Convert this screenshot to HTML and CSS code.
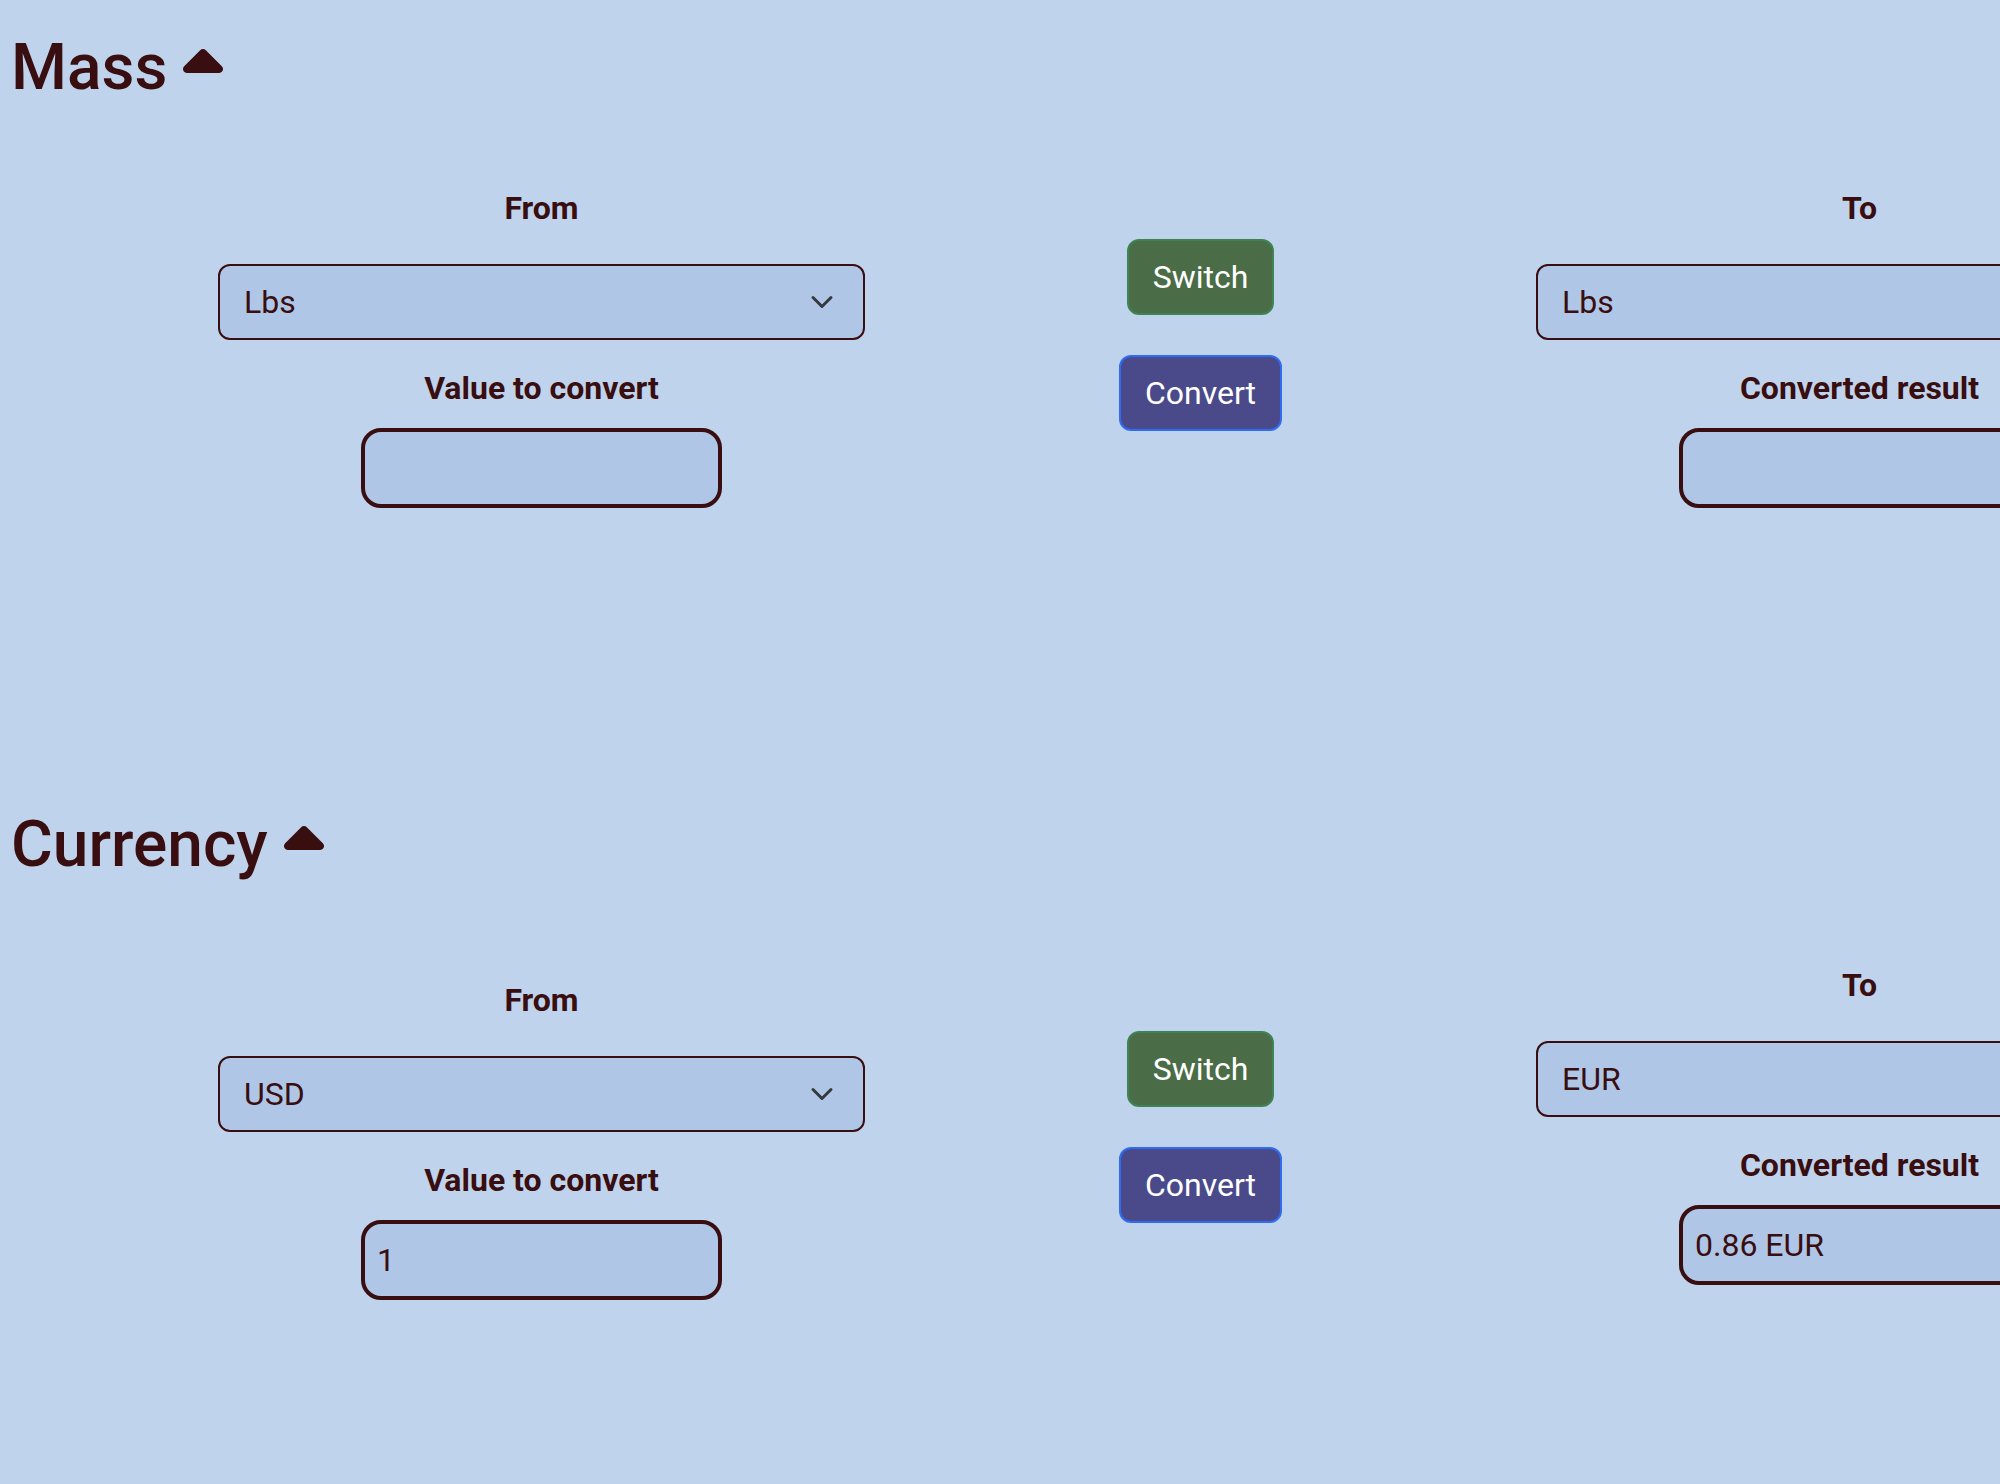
FILE: index.html
```html
<!DOCTYPE html>
<html lang="en">
<head>
<meta charset="utf-8">
<title>Unit converter</title>
<link rel="stylesheet" href="styles.css">
</head>
<body>
  <section class="converter">
    <h1 class="title">Mass <svg class="caret" viewBox="0 0 320 512" aria-hidden="true"><path d="M182.6 137.4c-12.5-12.5-32.8-12.5-45.3 0l-128 128c-9.2 9.2-11.9 22.9-6.9 34.9s16.6 19.8 29.6 19.8H288c12.9 0 24.6-7.8 29.6-19.8s2.2-25.7-6.9-34.9l-128-128z"/></svg></h1>
    <div class="row">
      <div class="col">
        <label class="label label--head">From</label>
        <div class="select"><span class="select__value">Lbs</span><svg class="chevron" viewBox="0 0 16 16" aria-hidden="true"><path d="m2 5 6 6 6-6"/></svg></div>
        <label class="label label--field">Value to convert</label>
        <input class="field" type="text" value="">
      </div>
      <div class="col actions">
        <button class="btn btn--switch" type="button">Switch</button>
        <button class="btn btn--convert" type="button">Convert</button>
      </div>
      <div class="col">
        <label class="label label--head">To</label>
        <div class="select"><span class="select__value">Lbs</span><svg class="chevron" viewBox="0 0 16 16" aria-hidden="true"><path d="m2 5 6 6 6-6"/></svg></div>
        <label class="label label--field">Converted result</label>
        <input class="field" type="text" value="" readonly>
      </div>
    </div>
  </section>

  <section class="converter">
    <h1 class="title">Currency <svg class="caret" viewBox="0 0 320 512" aria-hidden="true"><path d="M182.6 137.4c-12.5-12.5-32.8-12.5-45.3 0l-128 128c-9.2 9.2-11.9 22.9-6.9 34.9s16.6 19.8 29.6 19.8H288c12.9 0 24.6-7.8 29.6-19.8s2.2-25.7-6.9-34.9l-128-128z"/></svg></h1>
    <div class="row">
      <div class="col">
        <label class="label label--head">From</label>
        <div class="select"><span class="select__value">USD</span><svg class="chevron" viewBox="0 0 16 16" aria-hidden="true"><path d="m2 5 6 6 6-6"/></svg></div>
        <label class="label label--field">Value to convert</label>
        <input class="field" type="text" value="1">
      </div>
      <div class="col actions">
        <button class="btn btn--switch" type="button">Switch</button>
        <button class="btn btn--convert" type="button">Convert</button>
      </div>
      <div class="col">
        <label class="label label--head">To</label>
        <div class="select"><span class="select__value">EUR</span><svg class="chevron" viewBox="0 0 16 16" aria-hidden="true"><path d="m2 5 6 6 6-6"/></svg></div>
        <label class="label label--field">Converted result</label>
        <input class="field" type="text" value="0.86 EUR" readonly>
        <div class="rate"></div>
      </div>
    </div>
  </section>
</body>
</html>
```

FILE: styles.css
```css
html {
  overflow: hidden;
}

body {
  margin: 0;
  background: #c0d3ec;
  color: #380e10;
  font-family: Roboto, "Liberation Sans", sans-serif;
  font-size: 32px;
  line-height: 48px;
}

.converter {
  box-sizing: border-box;
  min-height: 777px;
  padding-top: 30px;
}

.title {
  margin: 0;
  padding-left: 11px;
  font-size: 64px;
  font-weight: 500;
  line-height: 76px;
}

.caret {
  width: 40px;
  height: 64px;
  vertical-align: -8px;
  fill: currentColor;
}

.row {
  display: grid;
  grid-template-columns: repeat(3, 659px);
  align-items: center;
  margin: 78px 0 0 212px;
}

.col {
  display: flex;
  flex-direction: column;
  align-items: center;
}

.label {
  display: block;
  font-weight: 700;
  text-align: center;
}

.label--head {
  margin-bottom: 32px;
}

.label--field {
  margin-top: 24px;
  margin-bottom: 16px;
}

.select {
  box-sizing: border-box;
  width: 647px;
  display: flex;
  align-items: center;
  justify-content: space-between;
  padding: 12px 29px 12px 24px;
  background: #b0c6e6;
  border: 2px solid #380e10;
  border-radius: 12px;
}

.select__value {
  line-height: 48px;
}

.chevron {
  width: 24px;
  height: 24px;
  fill: none;
  stroke: #343a40;
  stroke-width: 2;
  stroke-linecap: round;
  stroke-linejoin: round;
}

.field {
  box-sizing: border-box;
  width: 361px;
  height: 80px;
  margin: 0;
  padding: 12px 12px;
  font: inherit;
  color: #380e10;
  background: #b0c6e6;
  border: 4px solid #380e10;
  border-radius: 20px;
  outline: none;
}

.actions {
  padding-bottom: 23px;
}

.btn {
  margin: 0;
  padding: 12px 24px;
  font: inherit;
  color: #ffffff;
  border-radius: 12px;
  cursor: pointer;
}

.btn + .btn {
  margin-top: 40px;
}

.btn--switch {
  background: #4a6c46;
  border: 2px solid #3f8354;
}

.btn--convert {
  background: #4a4a8b;
  border: 2px solid #2f6cf2;
}

.rate {
  height: 30px;
}
```
